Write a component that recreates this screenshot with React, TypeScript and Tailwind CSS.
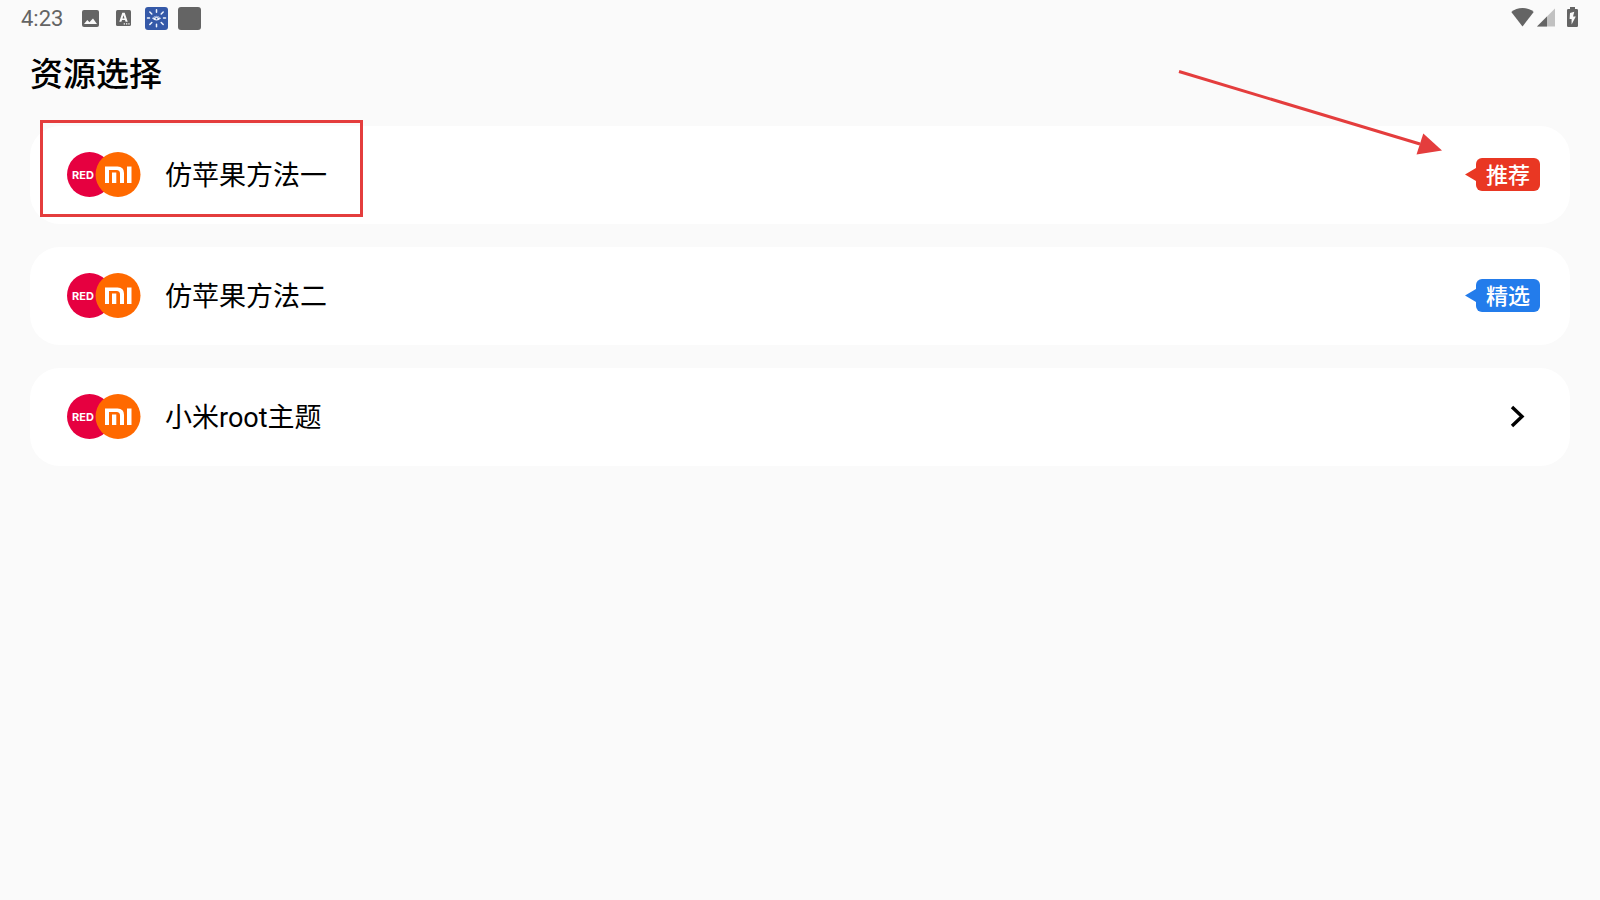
import type { ReactNode } from 'react'

type Tag = { label: string; box: string; tip: string }

type Resource = {
  id: string
  name: string
  tag?: Tag
  marked?: boolean
}

const RESOURCES: Resource[] = [
  { id: 'apple-1', name: '仿苹果方法一', tag: { label: '推荐', box: 'bg-[#e93723]', tip: 'text-[#e93723]' }, marked: true },
  { id: 'apple-2', name: '仿苹果方法二', tag: { label: '精选', box: 'bg-[#237ceb]', tip: 'text-[#237ceb]' } },
  { id: 'root', name: '小米root主题' },
]

function StatusBar() {
  return (
    <header className="flex h-9 items-center justify-between pl-[21px] pr-[22px] text-[#646464]">
      <div className="flex items-center">
        <span className="w-[61px] pt-px font-['Roboto',sans-serif] text-[22px] leading-9">4:23</span>
        <svg className="w-[17px] h-[17px]" viewBox="0 0 17 17" aria-hidden="true">
          <rect width="17" height="17" rx="2" fill="currentColor" />
          <path d="M2 14 L5.3 10 L7.5 12.3 L9 10.5 L11 8.5 L15 14 Z" fill="#fafafa" />
        </svg>
        <svg className="ml-[17px] w-[15px] h-4" viewBox="0 0 15 16" aria-hidden="true">
          <rect width="15" height="16" rx="1.5" fill="currentColor" />
          <path
            d="M6.3 2.8 H8.7 L11.7 11.8 H9.6 L9 10 H6 L5.4 11.8 H3.3 Z M7.5 5.3 L6.5 8.4 H8.5 Z"
            fill="#fafafa"
            fillRule="evenodd"
          />
          <path d="M7.7 13.3 h1.3 v1.3 h-1.3 Z M10 13.3 h1.3 v1.3 h-1.3 Z M12.3 13.3 h1.3 v1.3 h-1.3 Z" fill="#fafafa" />
        </svg>
        <svg className="ml-[14px] w-[23px] h-[23px]" viewBox="0 0 23 23" aria-hidden="true">
          <rect width="23" height="23" rx="3" fill="#3559a8" />
          <g stroke="#f1f5fd" strokeWidth="1.5" strokeLinecap="round">
            <path d="M11.5 2.8 V5.2 M11.5 17.3 V19.8 M2.5 11 H4.5 M18.5 11 H20.5" />
            <path d="M4.8 5 L6.8 7 M18.2 5 L16.2 7 M4.8 17.5 L6.8 15.5 M18.2 17.5 L16.2 15.5" />
          </g>
          <path d="M7 11.2 Q11.5 6.2 16 11.2 Q11.5 15.8 7 11.2 Z" fill="#f1f5fd" />
          <path d="M8.3 10.8 Q11.5 7.8 14.7 10.8" stroke="#3559a8" strokeWidth="0.7" fill="none" />
          <circle cx="11.5" cy="11.6" r="0.9" fill="#3559a8" />
        </svg>
        <span className="ml-[10px] size-[23px] rounded-[3px] bg-[#646464]" />
      </div>

      <div className="flex items-center pb-[2px]">
        <svg className="w-[23px] h-5" viewBox="0 0 23 20" aria-hidden="true">
          <path d="M11.5 19.5 L0.3 5 Q5 1 11.5 1 Q18 1 22.7 5 Z" fill="currentColor" />
        </svg>
        <svg className="ml-[3px] w-[18px] h-5" viewBox="0 0 18 20" aria-hidden="true">
          <path d="M18 1.5 V19.5 H0 Z" fill="#c1c1c1" />
          <path d="M10 9.5 V19.5 H0 Z" fill="currentColor" />
        </svg>
        <svg className="ml-3 w-[11px] h-5" viewBox="0 0 11 20" aria-hidden="true">
          <path d="M3 0 H8 V2 H9.8 Q11 2 11 3.2 V18.8 Q11 20 9.8 20 H1.2 Q0 20 0 18.8 V3.2 Q0 2 1.2 2 H3 Z" fill="currentColor" />
          <path d="M7.3 4.8 L3 6 L2.6 12 H4.6 V17.5 L8.8 9.5 H6 Z" fill="#fafafa" />
        </svg>
      </div>
    </header>
  )
}

function RedmiLogo() {
  return (
    <svg className="h-[45px] w-[74px] shrink-0" viewBox="0 0 74 45" aria-hidden="true">
      <circle cx="22.5" cy="22.5" r="22.5" fill="#e60040" />
      <text x="5" y="27" fontFamily="Inter, sans-serif" fontSize="11" fontWeight="700" fill="#fff">
        RED
      </text>
      <circle cx="51" cy="22.5" r="22.5" fill="#ff6900" />
      <g fill="#fff">
        <path d="M38 14.5 H50.5 Q57 14.5 57 21 V31 H53 V21.5 Q53 18 49.5 18 H42 V31 H38 Z" />
        <path d="M45 20.5 H49.3 V31 H45 Z" />
        <path d="M60 14.5 H64.5 V31 H60 Z" />
      </g>
    </svg>
  )
}

function TagBadge({ tag }: { tag: Tag }) {
  return (
    <span className="flex items-center">
      <svg className={`h-[13px] w-[11px] ${tag.tip}`} viewBox="0 0 11 13" aria-hidden="true">
        <path d="M0 6.5 L11 0 V13 Z" fill="currentColor" />
      </svg>
      <span className={`flex h-[33px] w-16 items-center justify-center rounded-md pt-[2px] text-[22px] font-medium leading-none text-white ${tag.box}`}>
        {tag.label}
      </span>
    </span>
  )
}

function Chevron() {
  return (
    <svg className="mr-[14px] h-6 w-4" viewBox="0 0 16 24" fill="none" aria-hidden="true">
      <path d="M2 2 L12 11.5 L2 21" stroke="#000" strokeWidth="3.4" />
    </svg>
  )
}

// Red frame and arrow drawn over the recommended row
function Annotation() {
  return (
    <>
      <span className="pointer-events-none absolute -top-[6px] left-[10px] h-[97px] w-[323px] border-3 border-[#e43d3d]" />
      <svg
        className="pointer-events-none absolute right-32 -top-14 h-[86px] w-[264px]"
        viewBox="0 0 264 86"
        aria-hidden="true"
      >
        <path d="M1 1.5 L242 74" stroke="#e43d3d" strokeWidth="3" />
        <path d="M245.3 63.5 L264 80.5 L238.5 84.5 Z" fill="#e43d3d" />
      </svg>
    </>
  )
}

function ResourceRow({ item, children }: { item: Resource; children?: ReactNode }) {
  return (
    <li className="relative">
      <button
        type="button"
        className="flex h-[98px] w-full items-center rounded-[30px] bg-white pb-px pl-[37px] pr-[30px] text-left"
      >
        <RedmiLogo />
        <span className="ml-6 flex-1 pt-[3px] text-[27px] leading-10">{item.name}</span>
        {item.tag ? <TagBadge tag={item.tag} /> : <Chevron />}
      </button>
      {children}
    </li>
  )
}

export default function App() {
  return (
    <div className="min-h-screen bg-[#fafafa] font-['Roboto','Noto_Sans_CJK_SC',sans-serif] text-black">
      <StatusBar />
      <main className="px-[30px]">
        <h1 className="pt-[13px] pb-[11px] text-[33px] font-medium leading-[52px]">资源选择</h1>
        <ul className="mt-[14px] flex flex-col gap-[23px]">
          {RESOURCES.map((item) => (
            <ResourceRow key={item.id} item={item}>
              {item.marked && <Annotation />}
            </ResourceRow>
          ))}
        </ul>
      </main>
    </div>
  )
}
